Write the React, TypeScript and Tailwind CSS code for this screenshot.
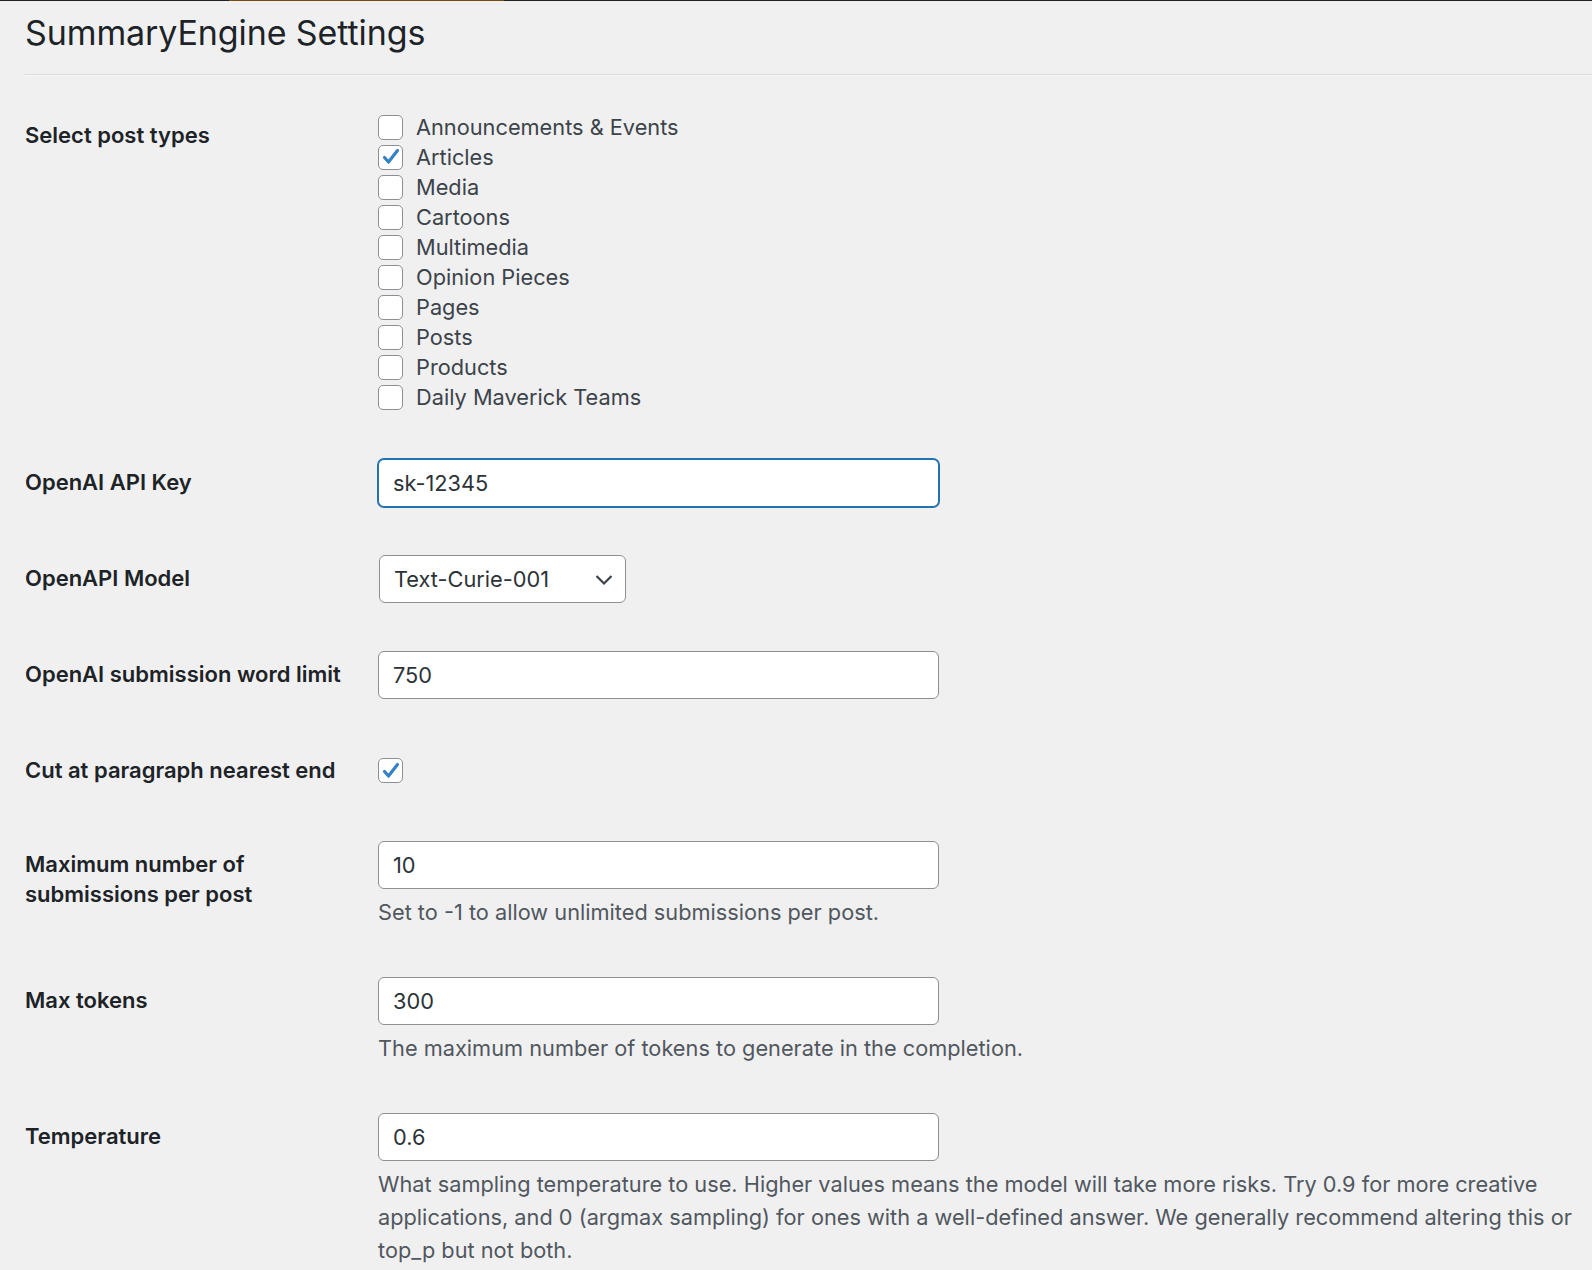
import { ReactNode } from 'react';

const postTypes = [
  { name: 'Announcements & Events', checked: false },
  { name: 'Articles', checked: true },
  { name: 'Media', checked: false },
  { name: 'Cartoons', checked: false },
  { name: 'Multimedia', checked: false },
  { name: 'Opinion Pieces', checked: false },
  { name: 'Pages', checked: false },
  { name: 'Posts', checked: false },
  { name: 'Products', checked: false },
  { name: 'Daily Maverick Teams', checked: false },
];

function Checkbox({ checked }: { checked: boolean }) {
  return (
    <span className="w-[25px] h-[25px] shrink-0 rounded-[5px] border border-[#8c8f94] bg-white flex items-center justify-center">
      {checked && (
        <svg width="20" height="20" viewBox="0 0 20 20" fill="none">
          <path d="M3.5 10.5l4 4.5L16.5 3.5" stroke="#3582c4" strokeWidth="3.2" strokeLinecap="round" strokeLinejoin="round" />
        </svg>
      )}
    </span>
  );
}

function Row({ label, children, tdClass = 'pt-[24px] pb-[24px]' }: { label: ReactNode; children: ReactNode; tdClass?: string }) {
  return (
    <div className="flex">
      <div className="w-[353px] shrink-0 pt-[32px] pb-[24px] pr-[10px] text-[22px] leading-[30px] font-semibold text-[#1d2327]">
        {label}
      </div>
      <div className={`flex-1 ${tdClass}`}>{children}</div>
    </div>
  );
}

function TextInput({ value, focused = false }: { value: string; focused?: boolean }) {
  return (
    <input
      readOnly
      value={value}
      className={`block w-[561px] h-[48px] rounded-[6px] bg-white px-[14px] text-[21.75px] text-[#2c3338] outline-none ${
        focused ? 'border border-[#2271b1] shadow-[0_0_0_1px_#2271b1]' : 'border border-[#8c8f94]'
      }`}
    />
  );
}

function Description({ children }: { children: ReactNode }) {
  return <p className="mt-[7px] text-[21.75px] leading-[33px] text-[#50575e] whitespace-nowrap">{children}</p>;
}

export default function App() {
  return (
    <div className="min-h-[1270px] bg-[#f0f0f1] font-['Inter','Open_Sans',sans-serif] text-[#3c434a]">
      {/* admin bar edge */}
      <div className="h-px bg-[#1d2327] flex">
        <div className="ml-[229px] w-[275px] bg-[#7a4a0f]" />
      </div>

      <div className="pl-[25px]">
        <h1 className="pt-[12px] text-[34px] leading-[40px] font-normal text-[#1d2327] tracking-[-0.1px]">SummaryEngine Settings</h1>
        <hr className="mt-[21px] border-0 border-t border-[#dcdcde] shadow-[0_1px_0_#f6f7f7]" />

        <div className="pt-[13px]">
          <Row label="Select post types" tdClass="pt-[24px] pb-[23px]">
            <div className="flex flex-col">
              {postTypes.map((t) => (
                <label key={t.name} className="h-[30px] flex items-center gap-[13px] text-[21.75px] text-[#3c434a]">
                  <Checkbox checked={t.checked} />
                  <span>{t.name}</span>
                </label>
              ))}
            </div>
          </Row>

          <Row label="OpenAI API Key">
            <TextInput value="sk-12345" focused />
          </Row>

          <Row label="OpenAPI Model">
            <div className="ml-px w-[247px] h-[48px] rounded-[6px] border border-[#8c8f94] bg-white pl-[14px] pr-[9px] flex items-center justify-between text-[21.75px] text-[#2c3338]">
              <span>Text-Curie-001</span>
              <svg width="24" height="24" viewBox="0 0 24 24" fill="none">
                <path d="M4.5 9l7.5 7.5L19.5 9" stroke="#3c434a" strokeWidth="2.2" />
              </svg>
            </div>
          </Row>

          <Row label="OpenAI submission word limit">
            <TextInput value="750" />
          </Row>

          <Row label="Cut at paragraph nearest end" tdClass="pt-[35px] pb-[34px]">
            <Checkbox checked />
          </Row>

          <Row label={<>Maximum number of<br />submissions per post</>}>
            <TextInput value="10" />
            <Description>Set to -1 to allow unlimited submissions per post.</Description>
          </Row>

          <Row label="Max tokens">
            <TextInput value="300" />
            <Description>The maximum number of tokens to generate in the completion.</Description>
          </Row>

          <Row label="Temperature">
            <TextInput value="0.6" />
            <Description>
              What sampling temperature to use. Higher values means the model will take more risks. Try 0.9 for more creative
              <br />
              applications, and 0 (argmax sampling) for ones with a well-defined answer. We generally recommend altering this or
              <br />
              top_p but not both.
            </Description>
          </Row>
        </div>
      </div>
    </div>
  );
}
